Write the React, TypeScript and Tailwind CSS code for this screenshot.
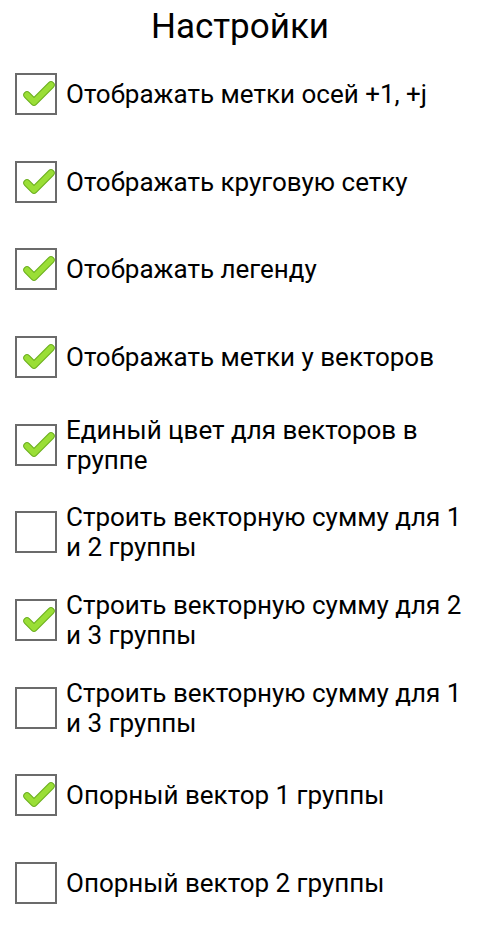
const items = [
  { label: "Отображать метки осей +1, +j", checked: true },
  { label: "Отображать круговую сетку", checked: true },
  { label: "Отображать легенду", checked: true },
  { label: "Отображать метки у векторов", checked: true },
  { label: "Единый цвет для векторов в группе", checked: true },
  { label: "Строить векторную сумму для 1 и 2 группы", checked: false },
  { label: "Строить векторную сумму для 2 и 3 группы", checked: true },
  { label: "Строить векторную сумму для 1 и 3 группы", checked: false },
  { label: "Опорный вектор 1 группы", checked: true },
  { label: "Опорный вектор 2 группы", checked: false },
];

// green tick drawn over the box
const Check = () => (
  <svg width="34" height="30" viewBox="0 0 34 30" className="absolute left-[5px] top-[5px]">
    <path
      d="M5 15 L12 22 L29 5"
      fill="none"
      stroke="#6aae1c"
      strokeWidth="7.5"
      strokeLinecap="round"
      strokeLinejoin="round"
    />
    <path
      d="M5 15 L12 22 L29 5"
      fill="none"
      stroke="#9ade36"
      strokeWidth="5.5"
      strokeLinecap="round"
      strokeLinejoin="round"
    />
  </svg>
);

const App = () => {
  return (
    <div className="w-[480px] h-[925px] bg-white font-['Roboto',sans-serif] text-black">
      <h1 className="h-[50px] flex items-center justify-center text-[35px] pt-[4px]">Настройки</h1>
      <div className="flex flex-col">
        {items.map((item) => (
          <div key={item.label} className="h-[87.7px] flex items-center pl-[15px] pr-[12px]">
            <div className="relative w-[42px] h-[42px] shrink-0 border-2 border-[#6b6b6b] bg-white">
              {item.checked && <Check />}
            </div>
            <span className="ml-[9px] text-[26px] leading-[30px]">{item.label}</span>
          </div>
        ))}
      </div>
    </div>
  );
};

export default App;
